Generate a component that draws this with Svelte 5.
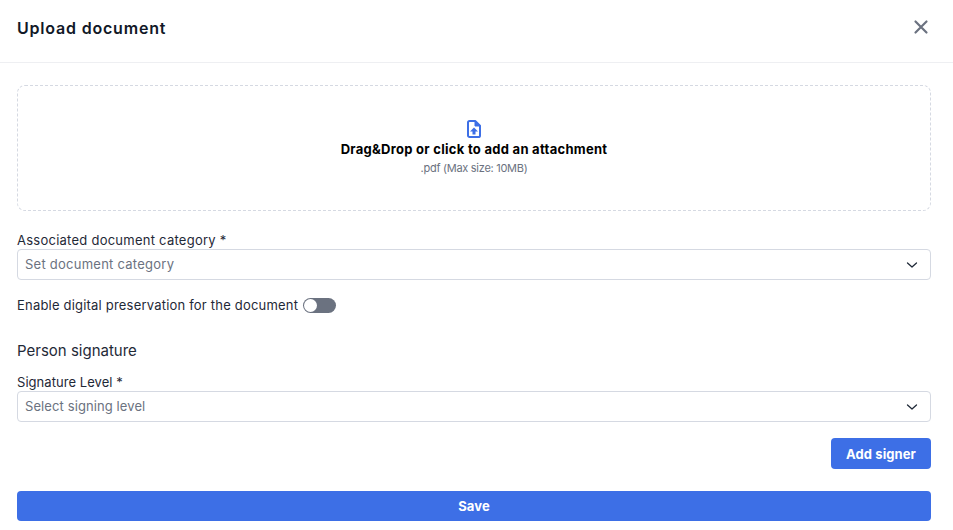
<script>
  const fields = { category: 'Set document category', level: 'Select signing level' };
</script>

<div class="modal">
  <header class="head">
    <h1>Upload document</h1>
    <button class="close" aria-label="Close">
      <svg width="16" height="16" viewBox="0 0 16 16" fill="none" stroke="#6b7280" stroke-width="2.200" stroke-linecap="round"><path d="M2.500 2.500l11 11M13.500 2.500l-11 11"/></svg>
    </button>
  </header>
  <main class="body">
    <div class="drop">
      <svg width="18" height="18" viewBox="0 0 18 18" fill="none">
        <path d="M3 2.600C3 1.700 3.700 1 4.600 1h5.600L15 5.800v9.600c0 .9-.7 1.600-1.600 1.600H4.600C3.700 17 3 16.300 3 15.400z" stroke="#3d6fe6" stroke-width="2" stroke-linejoin="round"/>
        <path d="M10 1.500V6h4.500z" fill="#3d6fe6" stroke="#3d6fe6" stroke-width="1"/>
        <path d="M9 7.500l4 3.900H10.500V14.500h-3v-3.100H5z" fill="#3d6fe6"/>
      </svg>
      <strong>Drag&amp;Drop or click to add an attachment</strong>
      <span>.pdf (Max size: 10MB)</span>
    </div>

    <label class="lbl first" for="cat">Associated document category *</label>
    <div class="select" id="cat">
      <span>{fields.category}</span>
      <svg width="12" height="8" viewBox="0 0 12 8" fill="none" stroke="#1f2937" stroke-width="1.300" stroke-linecap="round" stroke-linejoin="round"><path d="M1.500 2L6 6l4.500-4"/></svg>
    </div>

    <div class="toggle-row">
      <span>Enable digital preservation for the document</span>
      <div class="toggle"><i></i></div>
    </div>

    <h2>Person signature</h2>

    <label class="lbl tight" for="lvl">Signature Level *</label>
    <div class="select tight" id="lvl">
      <span>{fields.level}</span>
      <svg width="12" height="8" viewBox="0 0 12 8" fill="none" stroke="#1f2937" stroke-width="1.300" stroke-linecap="round" stroke-linejoin="round"><path d="M1.500 2L6 6l4.500-4"/></svg>
    </div>

    <div class="actions"><button class="btn add">Add signer</button></div>
    <button class="btn save">Save</button>
  </main>
</div>

<style>
  :global(body) { margin: 0; background: #fff; }
  .modal { width: 953px; height: 530px; font-family: "Inter", "Liberation Sans", sans-serif; color: #111827; box-sizing: border-box; overflow: hidden; }
  .head { height: 63px; box-sizing: border-box; border-bottom: 1px solid #eeeff2; display: flex; align-items: center; justify-content: space-between; padding: 0 24px 7px 17px; }
  h1 { margin: 0; font-size: 16px; line-height: 24px; font-weight: 600; letter-spacing: 0.8px; }
  .close { border: 0; background: none; padding: 0 0 1px; display: flex; }
  .body { padding: 22px 22px 0 17px; display: flex; flex-direction: column; }
  .drop { height: 126px; box-sizing: border-box; border: 1px dashed #d5d9e2; border-radius: 8px; display: flex; flex-direction: column; align-items: center; padding-top: 34px; }
  .drop strong { margin-top: 1px; font-size: 13px; line-height: 20px; font-weight: 700; color: #000; letter-spacing: 0.28px; }
  .drop span { margin-top: 1px; font-size: 11px; line-height: 17px; color: #6b7280; letter-spacing: -0.28px; }
  .lbl { display: block; font-size: 13px; line-height: 20px; color: #1f2937; letter-spacing: 0.25px; }
  .first { margin-top: 19px; }
  .select { margin-top: -1px; height: 31px; box-sizing: border-box; border: 1px solid #d5d9e2; border-radius: 4px; display: flex; align-items: center; justify-content: space-between; padding: 0 12px 0 7px; font-size: 13px; color: #6b7280; letter-spacing: 0.25px; }
  .select span { position: relative; top: -1px; }
  .lbl.tight { letter-spacing: 0.05px; }
  .select.tight { letter-spacing: 0.1px; }
  .toggle-row { margin-top: 15px; height: 20px; display: flex; align-items: center; gap: 5px; font-size: 13px; color: #1f2937; letter-spacing: 0.2px; }
  .toggle { width: 33px; height: 15px; border-radius: 8px; background: #6b7280; display: flex; align-items: center; padding-left: 1px; box-sizing: border-box; }
  .toggle i { width: 13px; height: 13px; border-radius: 50%; background: #fff; }
  h2 { margin: 25px 0 0; font-size: 15px; line-height: 22px; font-weight: 400; color: #1f2937; letter-spacing: 0; }
  h2 + .lbl { margin-top: 10px; }
  .actions { margin-top: 16px; display: flex; justify-content: flex-end; }
  .btn { border: 0; border-radius: 4px; background: #3d6fe6; color: #fff; font-family: inherit; font-size: 13px; font-weight: 700; letter-spacing: 0.1px; }
  .add { width: 100px; height: 31px; }
  .save { margin-top: 22px; height: 30px; }
</style>
